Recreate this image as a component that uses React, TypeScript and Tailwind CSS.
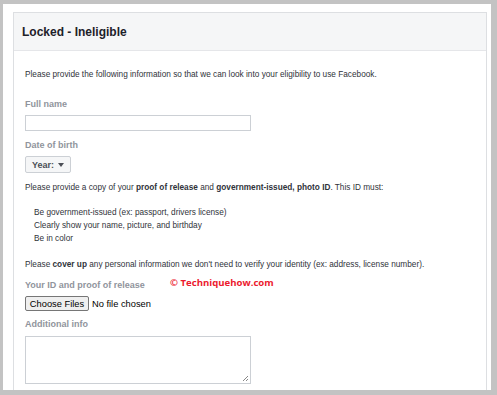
export default function App() {
  return (
    <div className="h-[395px] w-[497px] overflow-hidden bg-[#c3c3c3] pl-[3px] pt-[4px] font-['Liberation_Sans',Arial,sans-serif]">
      <div className="relative h-[386px] w-[488px] overflow-hidden bg-white pl-[10px] pt-[8px]">
        <div className="w-[474px] border border-[#dddfe2] bg-white">
          <div className="flex h-[38px] items-center border-b border-[#e5e6e9] bg-[#f5f6f7] pl-[8px]">
            <h1 className="text-[12px] font-bold text-[#1d2129]">Locked - Ineligible</h1>
          </div>

          <div className="flex flex-col items-start pl-[11px] text-[8.25px] leading-[12px] text-[#30333a]">
            <p className="mt-[18px]">
              Please provide the following information so that we can look into your eligibility to use Facebook.
            </p>

            <label className="mt-[17px] text-[9px] font-bold leading-[12px] text-[#90949c]">Full name</label>
            <input className="mt-[5px] h-[16px] w-[226px] border border-[#ccd0d5] bg-white" />

            <label className="mt-[8px] text-[9px] font-bold leading-[12px] text-[#90949c]">Date of birth</label>
            <button className="mt-[5px] flex h-[17px] w-[46px] items-center gap-[4px] rounded-[2px] border border-[#ccd0d5] bg-[#f5f6f7] pl-[6px] text-[9px] font-bold text-[#4b4f56]">
              Year:
              <span className="h-0 w-0 border-x-[3px] border-t-[4px] border-x-transparent border-t-[#4b4f56]" />
            </button>

            <p className="mt-[9px]">
              Please provide a copy of your <b>proof of release</b> and <b>government-issued, photo ID</b>. This ID must:
            </p>
            <ul className="mt-[12px] pl-[9px] leading-[13px]">
              <li>Be government-issued (ex: passport, drivers license)</li>
              <li>Clearly show your name, picture, and birthday</li>
              <li>Be in color</li>
            </ul>

            <p className="mt-[14px]">
              Please <b>cover up</b> any personal information we don't need to verify your identity (ex: address, license number).
            </p>

            <label className="mt-[8px] text-[9px] font-bold leading-[12px] text-[#90949c]">Your ID and proof of release</label>
            <div className="mt-[5px] flex h-[15px] items-center gap-[3px] text-[9.3px] text-black">
              <span className="flex h-[15px] w-[64px] items-center justify-center rounded-[2px] border border-[#767676] bg-[#efefef]">
                Choose Files
              </span>
              <span>No file chosen</span>
            </div>

            <label className="mt-[7px] text-[9px] font-bold leading-[12px] text-[#90949c]">Additional info</label>
            <div className="relative mt-[6px] h-[48px] w-[226px] border border-[#ccd0d5]">
              <svg className="absolute bottom-[1px] right-[1px]" width="7" height="7" viewBox="0 0 7 7">
                <path d="M6 1 L1 6 M6 4 L4 6" stroke="#888" strokeWidth="1" />
              </svg>
            </div>
            <div className="h-[20px]" />
          </div>
        </div>

        <div className="absolute left-[167px] top-[272px] font-['Open_Sans',sans-serif] text-[9.6px] font-bold text-[#ec1a2e]">
          © Techniquehow.com
        </div>
      </div>
    </div>
  );
}
